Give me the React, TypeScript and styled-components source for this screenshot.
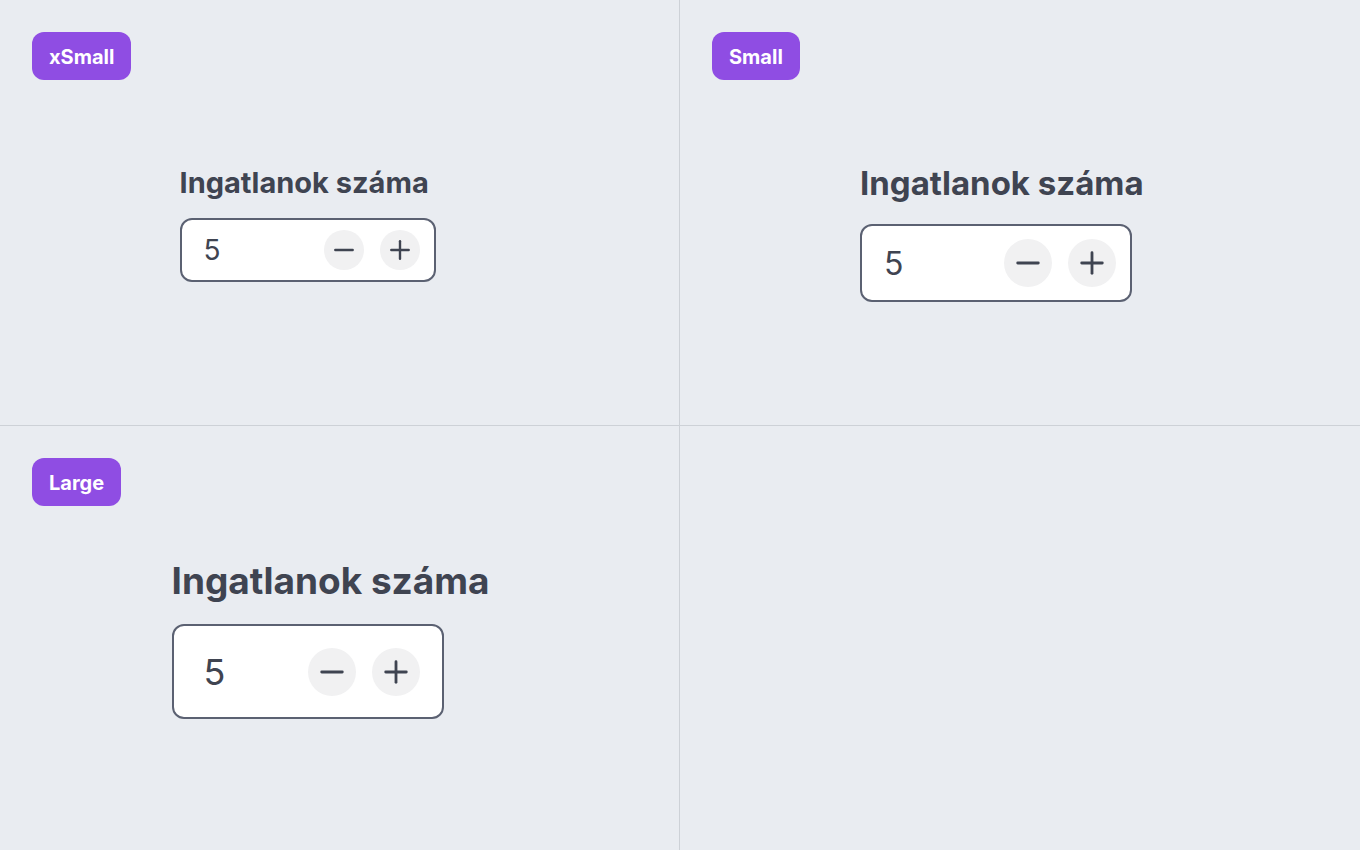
import React from "react";
import styled, { createGlobalStyle } from "styled-components";

type Size = "xSmall" | "Small" | "Large";

const GlobalStyle = createGlobalStyle`
  html, body {
    margin: 0;
    padding: 0;
    background: #e9ecf1;
    font-family: Inter, "Noto Sans", sans-serif;
  }
`;

const sizes = {
  xSmall: { width: 320, top: 85, label: 29, labelLh: 35, gap: 18, fieldW: 256, fieldH: 64, padL: 22, padR: 14, num: 28, btn: 40, icon: 22 },
  Small: { width: 320, top: 84, label: 33, labelLh: 39, gap: 21, fieldW: 272, fieldH: 78, padL: 22, padR: 14, num: 32, btn: 48, icon: 26 },
  Large: { width: 336, top: 52, label: 37, labelLh: 45, gap: 21, fieldW: 272, fieldH: 95, padL: 30, padR: 22, num: 36, btn: 48, icon: 26 },
};

const Board = styled.div`
  display: grid;
  grid-template-columns: 679px 1fr;
  grid-template-rows: 425px 1fr;
  gap: 1px;
  height: 850px;
  background: #cdd1d7;
`;

const Cell = styled.div`
  display: flex;
  flex-direction: column;
  padding: 32px;
  background: #e9ecf1;
  min-width: 0;
`;

const Badge = styled.span`
  align-self: flex-start;
  height: 48px;
  box-sizing: border-box;
  padding: 1px 17px 0;
  display: flex;
  align-items: center;
  border-radius: 12px;
  background: #8f4de3;
  color: #fff;
  font-size: 20px;
  font-weight: 700;
`;

const Demo = styled.div<{ $size: Size }>`
  align-self: center;
  width: ${(p) => sizes[p.$size].width}px;
  margin-top: ${(p) => sizes[p.$size].top}px;
  display: flex;
  flex-direction: column;
  gap: ${(p) => sizes[p.$size].gap}px;
`;

const Label = styled.label<{ $size: Size }>`
  font-size: ${(p) => sizes[p.$size].label}px;
  line-height: ${(p) => sizes[p.$size].labelLh}px;
  font-weight: 700;
  color: #3f4451;
  white-space: nowrap;
`;

const Field = styled.div<{ $size: Size }>`
  box-sizing: border-box;
  width: ${(p) => sizes[p.$size].fieldW}px;
  height: ${(p) => sizes[p.$size].fieldH}px;
  padding: 0 ${(p) => sizes[p.$size].padR}px 0 ${(p) => sizes[p.$size].padL}px;
  border: 2px solid #5b6172;
  border-radius: 12px;
  background: #fff;
  display: flex;
  align-items: center;
  gap: 16px;
`;

const Value = styled.span<{ $size: Size }>`
  flex: 1;
  font-size: ${(p) => sizes[p.$size].num}px;
  color: #3f4451;
`;

const StepButton = styled.button<{ $size: Size }>`
  width: ${(p) => sizes[p.$size].btn}px;
  height: ${(p) => sizes[p.$size].btn}px;
  flex: none;
  padding: 0;
  border: none;
  border-radius: 50%;
  background: #f1f1f2;
  color: #3f4451;
  display: flex;
  align-items: center;
  justify-content: center;
  cursor: pointer;
`;

function Icon({ plus, px }: { plus?: boolean; px: number }) {
  return (
    <svg width={px} height={px} viewBox="0 0 24 24" fill="none" stroke="currentColor" strokeWidth={2.6} strokeLinecap="round">
      <line x1="2.5" y1="12" x2="21.5" y2="12" />
      {plus && <line x1="12" y1="2.5" x2="12" y2="21.5" />}
    </svg>
  );
}

function Stepper({ size }: { size: Size }) {
  const s = sizes[size];
  return (
    <Demo $size={size}>
      <Label $size={size}>Ingatlanok száma</Label>
      <Field $size={size}>
        <Value $size={size}>5</Value>
        <StepButton $size={size} aria-label="Csökkentés">
          <Icon px={s.icon} />
        </StepButton>
        <StepButton $size={size} aria-label="Növelés">
          <Icon plus px={s.icon} />
        </StepButton>
      </Field>
    </Demo>
  );
}

export default function App() {
  return (
    <>
      <GlobalStyle />
      <Board>
        <Cell>
          <Badge>xSmall</Badge>
          <Stepper size="xSmall" />
        </Cell>
        <Cell>
          <Badge>Small</Badge>
          <Stepper size="Small" />
        </Cell>
        <Cell>
          <Badge>Large</Badge>
          <Stepper size="Large" />
        </Cell>
        <Cell />
      </Board>
    </>
  );
}
